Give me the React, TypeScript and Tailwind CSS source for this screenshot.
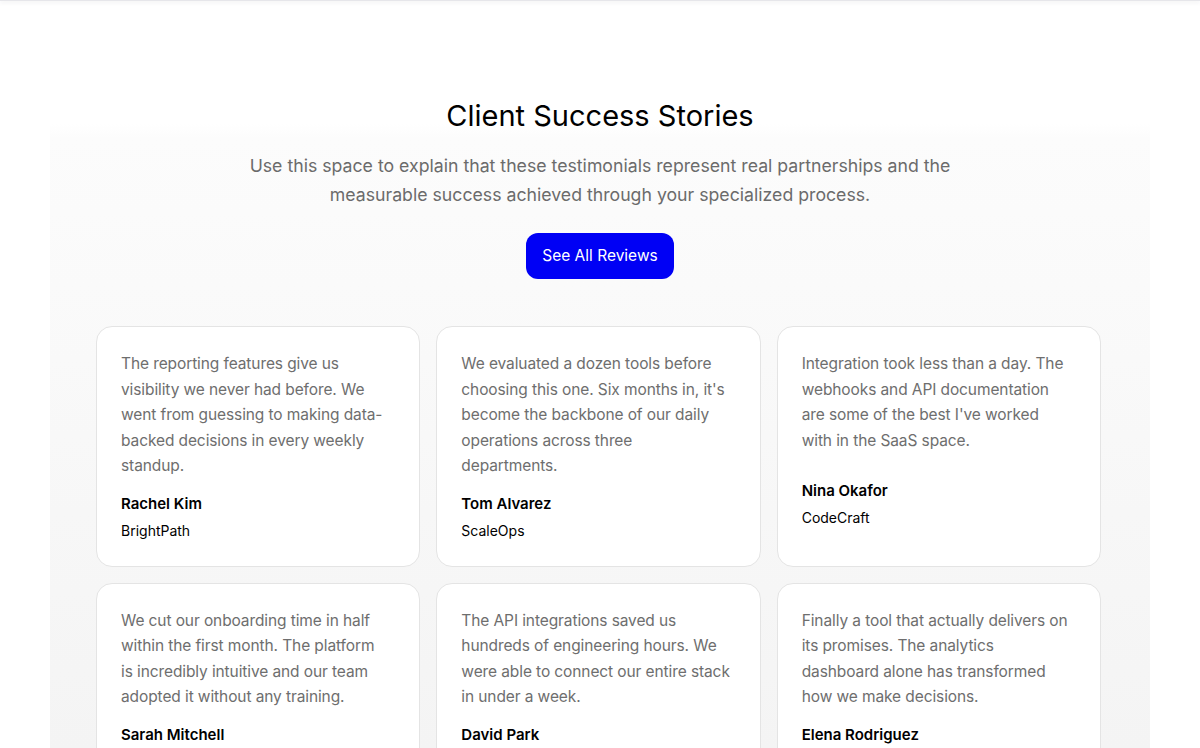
const testimonials = [
  {
    lines: [
      "The reporting features give us",
      "visibility we never had before. We",
      "went from guessing to making data-",
      "backed decisions in every weekly",
      "standup.",
    ],
    name: "Rachel Kim",
    company: "BrightPath",
  },
  {
    lines: [
      "We evaluated a dozen tools before",
      "choosing this one. Six months in, it's",
      "become the backbone of our daily",
      "operations across three",
      "departments.",
    ],
    name: "Tom Alvarez",
    company: "ScaleOps",
  },
  {
    lines: [
      "Integration took less than a day. The",
      "webhooks and API documentation",
      "are some of the best I've worked",
      "with in the SaaS space.",
    ],
    name: "Nina Okafor",
    company: "CodeCraft",
    roomy: true,
  },
  {
    lines: [
      "We cut our onboarding time in half",
      "within the first month. The platform",
      "is incredibly intuitive and our team",
      "adopted it without any training.",
    ],
    name: "Sarah Mitchell",
    company: "Northwind",
  },
  {
    lines: [
      "The API integrations saved us",
      "hundreds of engineering hours. We",
      "were able to connect our entire stack",
      "in under a week.",
    ],
    name: "David Park",
    company: "Stackline",
  },
  {
    lines: [
      "Finally a tool that actually delivers on",
      "its promises. The analytics",
      "dashboard alone has transformed",
      "how we make decisions.",
    ],
    name: "Elena Rodriguez",
    company: "Lumen Labs",
  },
];

type Testimonial = { lines: string[]; name: string; company: string; roomy?: boolean };

function TestimonialCard({ lines, name, company, roomy }: Testimonial) {
  return (
    <div className="flex flex-col rounded-2xl border border-[#e4e4e4] bg-white px-6 pt-6 pb-[23px]">
      <p className="text-[15.5px] leading-[25.5px] tracking-[-0.1px] whitespace-nowrap text-[#6e6e6e]">
        {lines.map((l, i) => (
          <span key={i} className="block">
            {l}
          </span>
        ))}
      </p>
      <p className={`${roomy ? "mt-[26px]" : "mt-[13px]"} text-[15px] leading-6 font-semibold text-black`}>{name}</p>
      <p className="mt-[3px] text-[14px] leading-6 text-black">{company}</p>
    </div>
  );
}

export default function App() {
  return (
    <div className="min-h-[748px] overflow-hidden bg-white font-['Inter',sans-serif]">
      {/* header edge */}
      <div className="h-px bg-[#e6e6ea] shadow-[0_1px_4px_rgba(40,40,60,0.18)]" />

      <section className="mx-auto mt-[97px] w-[1100px] bg-[linear-gradient(to_bottom,#ffffff_0px,#ffffff_26px,#fcfcfc_40px,#f9f9f9_260px,#f4f4f4_650px)] px-[46px] pb-16">
        <h2 className="text-center text-[29px] leading-9 font-normal text-black">Client Success Stories</h2>
        <p className="mx-auto mt-[17px] max-w-[720px] text-center text-[17.7px] leading-[29px] text-[#6b6b6b]">
          Use this space to explain that these testimonials represent real partnerships and the measurable success
          achieved through your specialized process.
        </p>
        <div className="mt-[24px] flex justify-center">
          <button className="h-[46px] w-[148px] rounded-xl bg-[#0000f5] text-[15.5px] text-white">
            See All Reviews
          </button>
        </div>

        <div className="mt-[47px] mr-[3px] grid grid-cols-3 gap-4">
          {testimonials.map((t) => (
            <TestimonialCard key={t.name} {...t} />
          ))}
        </div>
      </section>
    </div>
  );
}
